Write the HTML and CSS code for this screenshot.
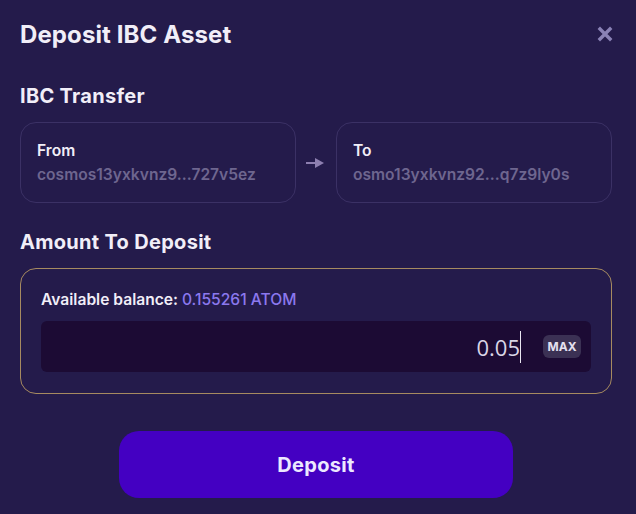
FILE: index.html
```html
<!DOCTYPE html>
<html lang="en">
<head>
    <meta charset="UTF-8">
    <meta name="viewport" content="width=device-width, initial-scale=1.0">
    <title>Deposit IBC Asset</title>
    <link rel="stylesheet" href="styles.css">
</head>
<body>
    <div class="modal">
        <div class="modal-header">
            <h1>Deposit IBC Asset</h1>
            <button class="close" type="button" aria-label="Close">
                <svg width="16" height="16" viewBox="0 0 16 16">
                    <path d="M3 3L13 13M13 3L3 13" stroke="#8a82b6" stroke-width="3.4" stroke-linecap="square"/>
                </svg>
            </button>
        </div>

        <h2>IBC Transfer</h2>
        <div class="transfer">
            <div class="chain-box">
                <div class="chain-label">From</div>
                <div class="chain-address">cosmos13yxkvnz9...727v5ez</div>
            </div>
            <div class="arrow">
                <svg width="18" height="10" viewBox="0 0 18 10">
                    <path d="M0 5H10" stroke="#8d7fb0" stroke-width="2"/>
                    <path d="M9 0L18 5L9 10Z" fill="#8d7fb0"/>
                </svg>
            </div>
            <div class="chain-box">
                <div class="chain-label">To</div>
                <div class="chain-address">osmo13yxkvnz92...q7z9ly0s</div>
            </div>
        </div>

        <h2>Amount To Deposit</h2>
        <div class="amount-box">
            <div class="balance">Available balance: <span class="balance-value">0.155261 ATOM</span></div>
            <div class="amount-input">
                <div class="amount-value">0.05<span class="caret"></span></div>
                <button class="max" type="button">MAX</button>
            </div>
        </div>

        <button class="deposit" type="button">Deposit</button>
    </div>
</body>
</html>
```

FILE: styles.css
```css
body {
    margin: 0;
    background-color: #241b4b;
    font-family: Inter, "Noto Sans", sans-serif;
    color: #f1eef8;
}
.modal {
    padding: 18px 24px 20px 20px;
}
.modal-header {
    display: flex;
    align-items: center;
    justify-content: space-between;
    height: 32px;
}
h1 {
    margin: 0;
    font-size: 24px;
    font-weight: 700;
    letter-spacing: 0.1px;
}
.close {
    background: none;
    border: none;
    padding: 0;
    margin-right: -1px;
    display: flex;
    cursor: pointer;
}
h2 {
    margin: 0;
    font-size: 20px;
    font-weight: 700;
    line-height: 24px;
    letter-spacing: 0.3px;
}
.modal-header + h2 {
    margin-top: 34px;
}
.transfer {
    display: grid;
    grid-template-columns: 1fr 40px 1fr;
    margin-top: 14px;
    margin-bottom: 27px;
}
.chain-box {
    border: 1px solid #3b3165;
    border-radius: 16px;
    padding: 16px 16px;
    height: 47px;
    display: flex;
    flex-direction: column;
    justify-content: center;
}
.chain-label {
    font-size: 15.6px;
    font-weight: 600;
    line-height: 24px;
}
.chain-address {
    font-size: 15.6px;
    font-weight: 600;
    line-height: 24px;
    color: #6e668f;
}
.arrow {
    display: flex;
    align-items: center;
    justify-content: center;
    padding-right: 2px;
}
.amount-box {
    margin-top: 14px;
    border: 1px solid #a68a60;
    border-radius: 16px;
    padding: 21px 20px 21px 20px;
}
.balance {
    font-size: 15.6px;
    font-weight: 600;
    line-height: 20px;
    margin-bottom: 11px;
}
.balance-value {
    color: #8b78ee;
    font-weight: 500;
}
.amount-input {
    display: flex;
    align-items: center;
    height: 51px;
    background-color: #1c0b34;
    border-radius: 6px;
    padding: 0 10px 0 16px;
}
.amount-value {
    flex: 1;
    font-family: "Open Sans", "Noto Sans", sans-serif;
    font-size: 22px;
    color: #d9d5e6;
    margin-right: 22px;
    display: flex;
    justify-content: flex-end;
    align-items: center;
}
.caret {
    display: inline-block;
    width: 1px;
    height: 32px;
    background-color: #e8e6f0;
}
.max {
    background-color: #3b3154;
    color: #e4e0f0;
    border: none;
    border-radius: 6px;
    font-family: Inter, sans-serif;
    font-size: 12px;
    font-weight: 700;
    width: 38px;
    height: 23px;
    padding: 0;
    cursor: pointer;
}
.deposit {
    display: block;
    margin: 37px auto 0 auto;
    width: 394px;
    height: 67px;
    background-color: #4400c2;
    color: #ece8ff;
    border: none;
    border-radius: 20px;
    font-family: Inter, sans-serif;
    font-size: 20px;
    font-weight: 700;
    letter-spacing: 0.3px;
    cursor: pointer;
}
```
